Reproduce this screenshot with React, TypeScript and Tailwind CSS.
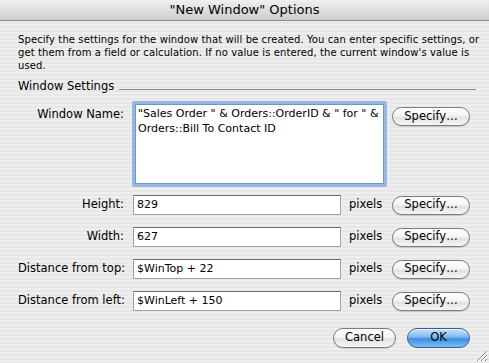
import React from 'react';

const font = "font-['DejaVu_Sans','Liberation_Sans',sans-serif]";

// Aqua-style pill button
const AquaButton: React.FC<{ label: string; primary?: boolean; className?: string }> = ({ label, primary, className }) => (
  <button
    type="button"
    className={
      'h-[19px] rounded-full border text-[11.5px] leading-none flex items-center justify-center text-black ' +
      (primary
        ? 'border-[#3a5d94] bg-[linear-gradient(180deg,#c6e2fb_0%,#7fb9ef_45%,#3f8de2_55%,#79c0f8_100%)] shadow-[inset_0_1px_0_rgba(255,255,255,0.6)] '
        : 'border-[#7c7c7c] bg-[linear-gradient(180deg,#ffffff_0%,#f4f4f4_45%,#e2e2e2_55%,#f6f6f6_100%)] shadow-[0_1px_1px_rgba(0,0,0,0.15)] ') +
      (className ?? '')
    }
  >
    {label}
  </button>
);

const FieldRow: React.FC<{ label: string; value: string }> = ({ label, value }) => (
  <div className="flex items-center h-[20px]">
    <span className="w-[106px] text-right text-[11.5px] text-black whitespace-nowrap">{label}</span>
    <div className="ml-[9px] w-[208px] h-[20px] bg-white border border-[#a0a0a0] border-t-[#6f6f6f] flex items-center px-[3px] text-[11px] text-black">
      {value}
    </div>
    <span className="ml-[8px] w-[35px] text-[11.5px] text-black">pixels</span>
    <AquaButton label="Specify…" className="ml-[8px] w-[78px]" />
  </div>
);

export default function App() {
  return (
    <div className={`${font} relative w-[489px] h-[363px] overflow-hidden bg-[repeating-linear-gradient(180deg,#eeeeee_0px,#eeeeee_2px,#e7e7e7_2px,#e7e7e7_4px)]`}>
      {/* Title bar */}
      <div className="h-[21px] rounded-t-[5px] border-b border-[#8e8e8e] bg-[linear-gradient(180deg,#f0f0f0_0%,#dedede_50%,#cdcdcd_100%)] flex items-center justify-center text-[13px] text-black">
        "New Window" Options
      </div>

      <div className="pl-[18px] pr-[14px] pt-[12px]">
        <p className="mr-[-6px] text-[10px] tracking-[0.1px] leading-[13px] text-black">
          Specify the settings for the window that will be created. You can enter specific settings, or get them from a field or calculation. If no value is entered, the current window's value is used.
        </p>

        {/* Section header */}
        <div className="mt-[8px] flex items-center h-[14px]">
          <span className="text-[11.5px] text-black">Window Settings</span>
          <div className="ml-[5px] mt-[4px] flex-1 h-px bg-[#8c8c8c] mr-[-1px]" />
        </div>

        {/* Window name */}
        <div className="mt-[7px] flex items-start">
          <span className="w-[106px] mt-[5px] text-right text-[11.5px] text-black">Window Name:</span>
          <div className="ml-[8px] w-[255px] h-[86px] rounded-[2px] border-[3px] border-[#93b9e4] bg-white">
            <div className="h-full border border-[#7394bd] px-[2px] pt-[1px] text-[11px] leading-[15px] text-black">
              "Sales Order " &amp; Orders::OrderID &amp; " for " &amp; Orders::Bill To Contact ID
            </div>
          </div>
          <AquaButton label="Specify…" className="ml-[5px] mt-[6px] w-[78px]" />
        </div>

        <div className="mt-[8px] flex flex-col gap-[12px]">
          <FieldRow label="Height:" value="829" />
          <FieldRow label="Width:" value="627" />
          <FieldRow label="Distance from top:" value="$WinTop + 22" />
          <FieldRow label="Distance from left:" value="$WinLeft + 150" />
        </div>

        <div className="mt-[17px] flex justify-end gap-[11px] pr-[5px]">
          <AquaButton label="Cancel" className="w-[63px] h-[20px]" />
          <AquaButton label="OK" primary className="w-[63px] h-[20px]" />
        </div>
      </div>

      {/* Resize grip */}
      <svg className="absolute right-[1px] bottom-[1px]" width="13" height="13" viewBox="0 0 13 13">
        <path d="M12 2 L2 12 M12 6 L6 12 M12 10 L10 12" stroke="#8a8a8a" strokeWidth="1" />
        <path d="M12 3 L3 12 M12 7 L7 12" stroke="#ffffff" strokeWidth="1" />
      </svg>
    </div>
  );
}
